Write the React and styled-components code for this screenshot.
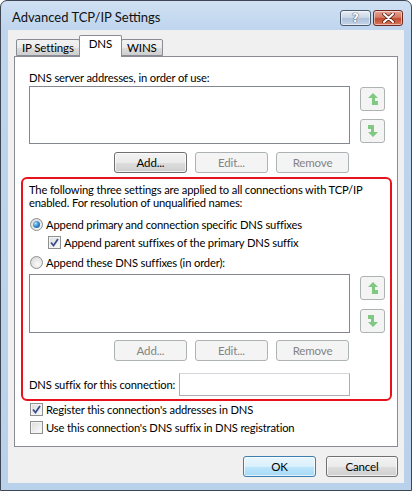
import React from "react";
import styled, { createGlobalStyle } from "styled-components";

const GlobalStyle = createGlobalStyle`
  html, body {
    margin: 0;
    padding: 0;
    background: #ffffff;
  }
  body {
    font-family: Lato, "Liberation Sans", sans-serif;
    font-size: 11.2px;
    letter-spacing: -0.15px;
    color: #000;
  }
`;

// window frame
const Window = styled.div`
  width: 412px;
  height: 491px;
  box-sizing: border-box;
  border: 1px solid #3d4652;
  border-radius: 7px 7px 0 0;
  background: linear-gradient(#cfe0f2 0px, #bfd5ee 30px, #b9d1ea 100%);
  box-shadow: 0 1px 0 #35c6de;
  display: flex;
  flex-direction: column;
  padding: 0 7px 7px;
`;

const TitleBar = styled.div`
  height: 29px;
  flex-shrink: 0;
  display: flex;
  align-items: flex-start;
  justify-content: space-between;
`;

const Title = styled.span`
  margin: 8px 0 0 4px;
  font-size: 13px;
  letter-spacing: 0;
  line-height: 16px;
  color: #111;
`;

const CaptionButtons = styled.div`
  display: flex;
  gap: 2px;
  margin: 9px 1px 0 0;
`;

const CaptionButton = styled.div`
  width: ${({ wide }) => (wide ? 29 : 28)}px;
  height: 14px;
  border: 1px solid ${({ close }) => (close ? "#6d2a22" : "#4c5b6e")};
  border-radius: 3px;
  box-sizing: content-box;
  display: flex;
  align-items: center;
  justify-content: center;
  background: ${({ close }) =>
    close
      ? "linear-gradient(#e8a493 0%, #d47a66 45%, #c14a2f 55%, #d9775a 100%)"
      : "linear-gradient(#e7eef6 0%, #cbd8e7 45%, #adc1d9 55%, #c6d6ea 100%)"};
  box-shadow: inset 0 0 0 1px rgba(255, 255, 255, 0.5);
  color: #fff;
  font-family: "DejaVu Sans", sans-serif;
  font-weight: bold;
  font-size: 12px;
  line-height: 14px;
  text-shadow: 0 0 1px #2f3c4e, 0 0 1px #2f3c4e;
`;

const Client = styled.div`
  flex: 1;
  background: #f0f0f0;
  padding: 5px 6px 0 6px;
  display: flex;
  flex-direction: column;
`;

const TabStrip = styled.div`
  display: flex;
  align-items: flex-end;
  height: 21px;
  flex-shrink: 0;
  padding-left: 2px;
  position: relative;
  z-index: 1;
`;

const Tab = styled.div`
  height: ${({ active }) => (active ? 21 : 15)}px;
  padding: 0 ${({ active }) => (active ? 9 : 5)}px;
  margin-left: ${({ first }) => (first ? 0 : -1)}px;
  margin-bottom: ${({ active }) => (active ? -1 : 0)}px;
  border: 1px solid #898c95;
  border-bottom: ${({ active }) => (active ? "none" : "1px solid #898c95")};
  border-radius: 2px 2px 0 0;
  background: ${({ active }) =>
    active ? "#ffffff" : "linear-gradient(#f2f2f2, #ebebeb 50%, #dddddd 51%, #cfcfcf)"};
  font-size: 11.5px;
  line-height: 16px;
  box-sizing: content-box;
  z-index: ${({ active }) => (active ? 2 : 1)};
  position: relative;
`;

const Panel = styled.div`
  height: 391px;
  flex-shrink: 0;
  box-sizing: border-box;
  border: 1px solid #898c95;
  background: #ffffff;
  padding: 14px 12px 0 14px;
  display: flex;
  flex-direction: column;
`;

const Label = styled.div`
  line-height: ${({ lh }) => lh || 14}px;
  color: ${({ disabled }) => (disabled ? "#8d8d8d" : "#000")};
  white-space: nowrap;
`;

const ListRow = styled.div`
  display: flex;
  gap: 10px;
  margin-top: ${({ mt }) => mt || 0}px;
`;

const MainCol = styled.div`
  width: 321px;
  display: flex;
  flex-direction: column;
`;

const ListBox = styled.div`
  height: ${({ h }) => h}px;
  border: 1px solid #828790;
  background: #fff;
  box-sizing: border-box;
`;

const SideCol = styled.div`
  display: flex;
  flex-direction: column;
  gap: ${({ gap }) => gap}px;
  padding-top: ${({ pt }) => pt}px;
`;

const ArrowButton = styled.div`
  width: 25px;
  height: 24px;
  box-sizing: border-box;
  border: 1px solid #adb2b5;
  border-radius: 3px;
  background: #f4f4f4;
  display: flex;
  align-items: center;
  justify-content: center;
`;

const ButtonRow = styled.div`
  display: flex;
  justify-content: flex-end;
  gap: 8px;
  margin-top: ${({ mt }) => mt}px;
  padding-right: 1px;
`;

const Button = styled.div`
  width: ${({ w }) => w || 73}px;
  height: 21px;
  box-sizing: border-box;
  border: 1px solid ${({ disabled, primary }) =>
    disabled ? "#adb2b5" : primary ? "#3c7fb1" : "#707070"};
  border-radius: 3px;
  display: flex;
  align-items: center;
  justify-content: center;
  font-size: 11.5px;
  color: ${({ disabled }) => (disabled ? "#838383" : "#000")};
  background: ${({ disabled, primary }) =>
    disabled
      ? "#f4f4f4"
      : primary
      ? "linear-gradient(#eaf6fd, #d9f0fc 50%, #bee6fd 51%, #a7d9f5)"
      : "linear-gradient(#f2f2f2, #ebebeb 50%, #dddddd 51%, #cfcfcf)"};
  box-shadow: ${({ disabled }) =>
    disabled ? "none" : "inset 0 0 0 1px rgba(255, 255, 255, 0.7)"};
`;

// red outlined group of global settings
const Highlight = styled.div`
  margin: 4px -7px 0 -8px;
  border: 2px solid #e8121c;
  border-radius: 6px;
  padding: 4px 5px 3px 6px;
  display: flex;
  flex-direction: column;
`;

const OptionRow = styled.label`
  display: flex;
  align-items: center;
  height: 16px;
  gap: 3px;
  margin-top: ${({ mt }) => mt || 0}px;
  padding-left: ${({ indent }) => (indent ? 19 : 1)}px;
`;

const Radio = styled.span`
  width: 13px;
  height: 13px;
  box-sizing: border-box;
  border-radius: 50%;
  border: 1px solid #8e8f8f;
  background: radial-gradient(circle at 60% 65%, #fbfbfb 0%, #e3e3e3 60%, #cfcfcf 100%);
  display: flex;
  align-items: center;
  justify-content: center;
  &::after {
    content: "";
    display: ${({ checked }) => (checked ? "block" : "none")};
    width: 7px;
    height: 7px;
    border-radius: 50%;
    background: radial-gradient(circle at 35% 35%, #b5e0fb 0%, #3d8fd0 45%, #14497f 100%);
  }
`;

const Check = styled.span`
  width: 13px;
  height: 13px;
  box-sizing: border-box;
  border: 1px solid #8e8f8f;
  background: linear-gradient(135deg, #dcdcdc, #fcfcfc);
  box-shadow: inset 0 0 0 1px #f4f4f4;
  display: flex;
  align-items: center;
  justify-content: center;
`;

const SuffixRow = styled.div`
  display: flex;
  align-items: center;
  justify-content: space-between;
  width: 321px;
  margin-top: 12px;
`;

const TextBox = styled.div`
  width: 171px;
  height: 23px;
  box-sizing: border-box;
  border: 1px solid #abadb3;
  border-top-color: #d5d7dc;
  background: #fff;
`;

const Footer = styled.div`
  display: flex;
  justify-content: flex-end;
  gap: 10px;
  margin-top: 9px;
`;

const UpArrow = () => (
  <svg width="12" height="14" viewBox="0 0 12 14">
    <path d="M6 1 L11 6 H8 V9 H11 V13 H5 V6 H1 Z" fill="#7fc982" />
  </svg>
);

const DownArrow = () => (
  <svg width="12" height="14" viewBox="0 0 12 14">
    <path d="M1 1 H7 V8 H11 L6 13 L1 8 H4 V5 H1 Z" fill="#7fc982" />
  </svg>
);

const CheckMark = () => (
  <svg width="9" height="9" viewBox="0 0 9 9">
    <path d="M1 4.5 L3.5 7.5 L8 1" fill="none" stroke="#3b4f8f" strokeWidth="1.8" />
  </svg>
);

const CloseGlyph = () => (
  <svg width="13" height="10" viewBox="0 0 13 10">
    <path
      d="M2 1 L11 9 M11 1 L2 9"
      stroke="#5a2016"
      strokeWidth="3.6"
      strokeLinecap="round"
    />
    <path
      d="M2 1 L11 9 M11 1 L2 9"
      stroke="#ffffff"
      strokeWidth="2"
      strokeLinecap="round"
    />
  </svg>
);

const ArrowPair = ({ pt, gap }) => (
  <SideCol pt={pt} gap={gap}>
    <ArrowButton>
      <UpArrow />
    </ArrowButton>
    <ArrowButton>
      <DownArrow />
    </ArrowButton>
  </SideCol>
);

const App = () => (
  <>
    <GlobalStyle />
    <Window>
      <TitleBar>
        <Title>Advanced TCP/IP Settings</Title>
        <CaptionButtons>
          <CaptionButton wide>?</CaptionButton>
          <CaptionButton close>
            <CloseGlyph />
          </CaptionButton>
        </CaptionButtons>
      </TitleBar>
      <Client>
        <TabStrip>
          <Tab first>IP Settings</Tab>
          <Tab active>DNS</Tab>
          <Tab>WINS</Tab>
        </TabStrip>
        <Panel>
          <Label>DNS server addresses, in order of use:</Label>
          <ListRow mt={1}>
            <MainCol>
              <ListBox h={58} />
              <ButtonRow mt={8}>
                <Button>Add...</Button>
                <Button disabled>Edit...</Button>
                <Button disabled>Remove</Button>
              </ButtonRow>
            </MainCol>
            <ArrowPair pt={1} gap={8} />
          </ListRow>

          <Highlight>
            <Label lh={13}>
              The following three settings are applied to all connections with TCP/IP
            </Label>
            <Label lh={13}>enabled. For resolution of unqualified names:</Label>
            <OptionRow mt={7}>
              <Radio checked />
              Append primary and connection specific DNS suffixes
            </OptionRow>
            <OptionRow mt={2} indent>
              <Check>
                <CheckMark />
              </Check>
              Append parent suffixes of the primary DNS suffix
            </OptionRow>
            <OptionRow mt={4}>
              <Radio />
              Append these DNS suffixes (in order):
            </OptionRow>
            <ListRow mt={4}>
              <MainCol>
                <ListBox h={59} />
                <ButtonRow mt={7}>
                  <Button disabled>Add...</Button>
                  <Button disabled>Edit...</Button>
                  <Button disabled>Remove</Button>
                </ButtonRow>
              </MainCol>
              <ArrowPair pt={2} gap={9} />
            </ListRow>
            <SuffixRow>
              <Label>DNS suffix for this connection:</Label>
              <TextBox />
            </SuffixRow>
          </Highlight>

          <OptionRow>
            <Check>
              <CheckMark />
            </Check>
            Register this connection's addresses in DNS
          </OptionRow>
          <OptionRow mt={2}>
            <Check />
            Use this connection's DNS suffix in DNS registration
          </OptionRow>
        </Panel>
        <Footer>
          <Button primary>OK</Button>
          <Button w={72}>Cancel</Button>
        </Footer>
      </Client>
    </Window>
  </>
);

export default App;
